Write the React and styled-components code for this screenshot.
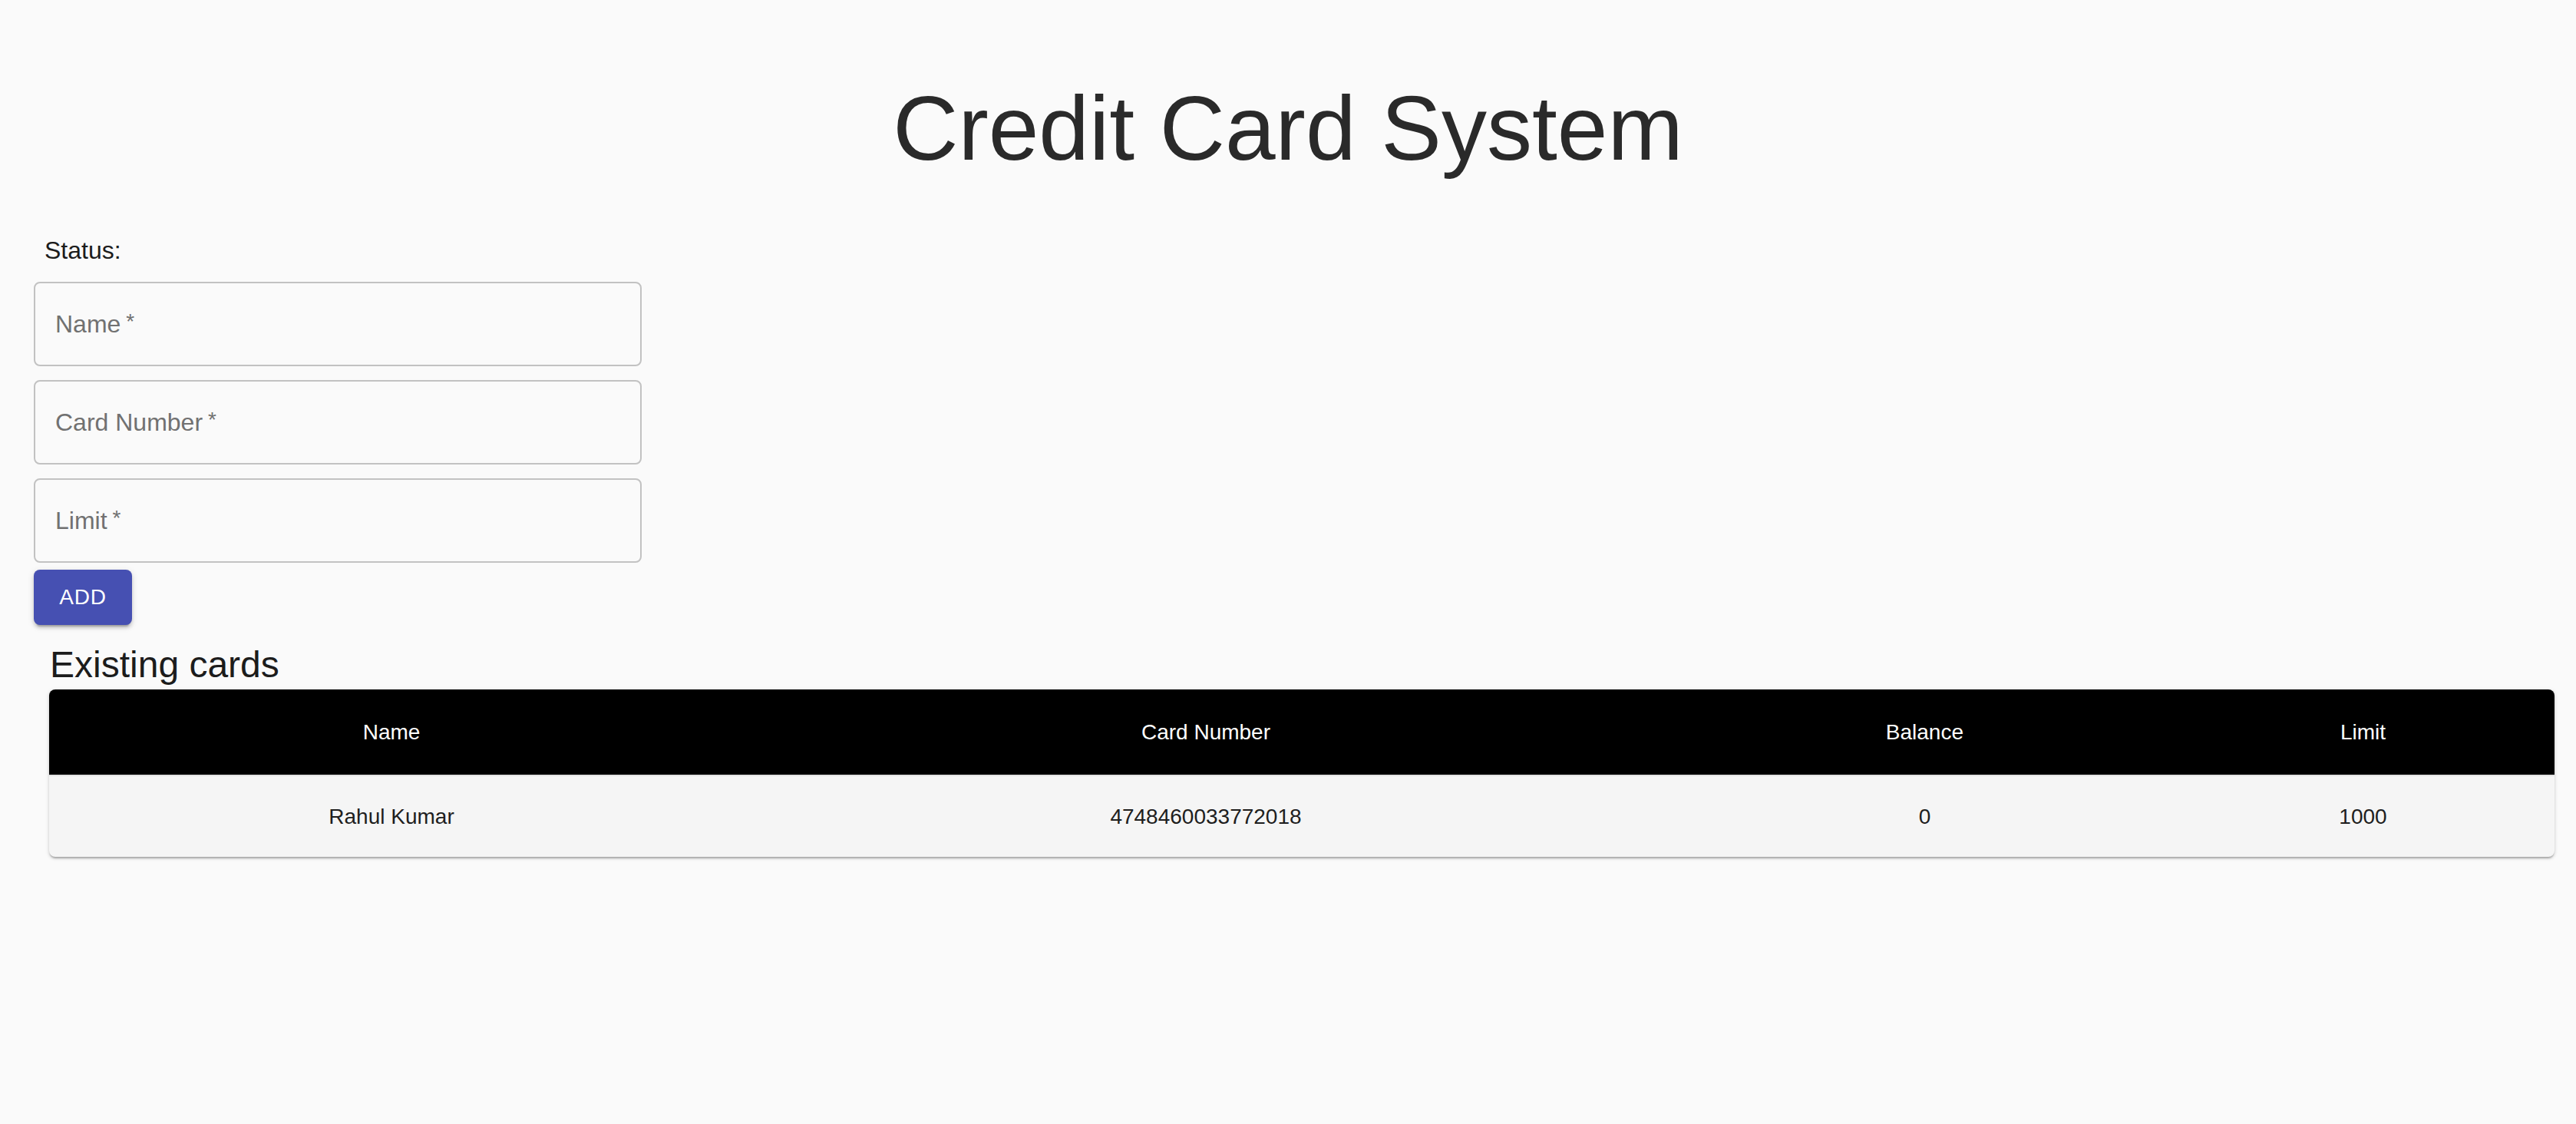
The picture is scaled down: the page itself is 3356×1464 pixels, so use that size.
import React from "react";
import styled, { createGlobalStyle } from "styled-components";

const GlobalStyle = createGlobalStyle`
  html, body {
    margin: 0;
    padding: 0;
    background: #fafafa;
  }
  body {
    font-family: "Liberation Sans", Arial, Helvetica, sans-serif;
    color: rgba(0, 0, 0, 0.87);
  }
  * {
    box-sizing: border-box;
  }
`;

// header
const Page = styled.div`
  display: flex;
  flex-direction: column;
  min-height: 1464px;
`;
const Title = styled.h1`
  margin: 95px 0 0;
  text-align: center;
  font-size: 118px;
  line-height: 144px;
  font-weight: 300;
  color: #2a2a2a;
`;

// form
const Form = styled.form`
  display: flex;
  flex-direction: column;
  width: 792px;
  margin: 63px 0 0 44px;
`;
const Status = styled.div`
  padding-left: 14px;
  font-size: 32px;
  line-height: 48px;
  color: #1c1c1c;
  margin-bottom: 17px;
`;
const FieldList = styled.div`
  display: flex;
  flex-direction: column;
  gap: 18px;
`;
const Field = styled.label`
  display: flex;
  align-items: center;
  height: 110px;
  padding-left: 26px;
  border: 2px solid #c2c2c2;
  border-radius: 8px;
  font-size: 32px;
  color: #717171;
  cursor: text;
`;
const Star = styled.span`
  margin-left: 7px;
  font-size: 28px;
  align-self: center;
  margin-top: -6px;
`;
const AddButton = styled.button`
  align-self: flex-start;
  margin-top: 9px;
  width: 128px;
  height: 72px;
  border: none;
  border-radius: 8px;
  background: #4650b2;
  color: #fff;
  font-family: inherit;
  font-size: 28px;
  letter-spacing: 0.8px;
  text-transform: uppercase;
  box-shadow: 0 6px 2px -4px rgba(0, 0, 0, 0.2), 0 4px 4px 0 rgba(0, 0, 0, 0.14),
    0 2px 10px 0 rgba(0, 0, 0, 0.12);
  cursor: pointer;
`;

// list
const SectionTitle = styled.h2`
  margin: 20px 0 0 65px;
  font-size: 48px;
  line-height: 64px;
  font-weight: 400;
  color: #1c1c1c;
`;
const TablePaper = styled.div`
  margin: 0 28px 0 64px;
  border-radius: 8px;
  overflow: hidden;
  background: #f5f5f5;
  box-shadow: 0 3px 2px -1px rgba(0, 0, 0, 0.22), 0 2px 4px 0 rgba(0, 0, 0, 0.12),
    0 1px 6px 0 rgba(0, 0, 0, 0.08);
`;
const Table = styled.table`
  width: 100%;
  border-collapse: collapse;
  table-layout: fixed;
`;
const HeadCell = styled.th`
  height: 112px;
  padding: 0;
  background: #000;
  color: #fff;
  font-size: 28px;
  font-weight: 400;
  text-align: center;
  width: ${(props) => props.$width};
`;
const BodyCell = styled.td`
  height: 106px;
  padding: 0;
  border-top: 2px solid #e2e2e2;
  font-size: 28px;
  color: #1e1e1e;
  text-align: center;
`;

const fields = ["Name", "Card Number", "Limit"];
const columns = [
  { title: "Name", width: "27.33%" },
  { title: "Card Number", width: "37.68%" },
  { title: "Balance", width: "19.70%" },
  { title: "Limit", width: "15.29%" },
];
const cards = [
  { name: "Rahul Kumar", number: "4748460033772018", balance: 0, limit: 1000 },
];

export default function App() {
  return (
    <>
      <GlobalStyle />
      <Page>
        <Title>Credit Card System</Title>
        <Form onSubmit={(e) => e.preventDefault()}>
          <Status>Status:</Status>
          <FieldList>
            {fields.map((f) => (
              <Field key={f}>
                {f}
                <Star>*</Star>
              </Field>
            ))}
          </FieldList>
          <AddButton type="submit">Add</AddButton>
        </Form>
        <SectionTitle>Existing cards</SectionTitle>
        <TablePaper>
          <Table>
            <thead>
              <tr>
                {columns.map((c) => (
                  <HeadCell key={c.title} $width={c.width}>
                    {c.title}
                  </HeadCell>
                ))}
              </tr>
            </thead>
            <tbody>
              {cards.map((card) => (
                <tr key={card.number}>
                  <BodyCell>{card.name}</BodyCell>
                  <BodyCell>{card.number}</BodyCell>
                  <BodyCell>{card.balance}</BodyCell>
                  <BodyCell>{card.limit}</BodyCell>
                </tr>
              ))}
            </tbody>
          </Table>
        </TablePaper>
      </Page>
    </>
  );
}
